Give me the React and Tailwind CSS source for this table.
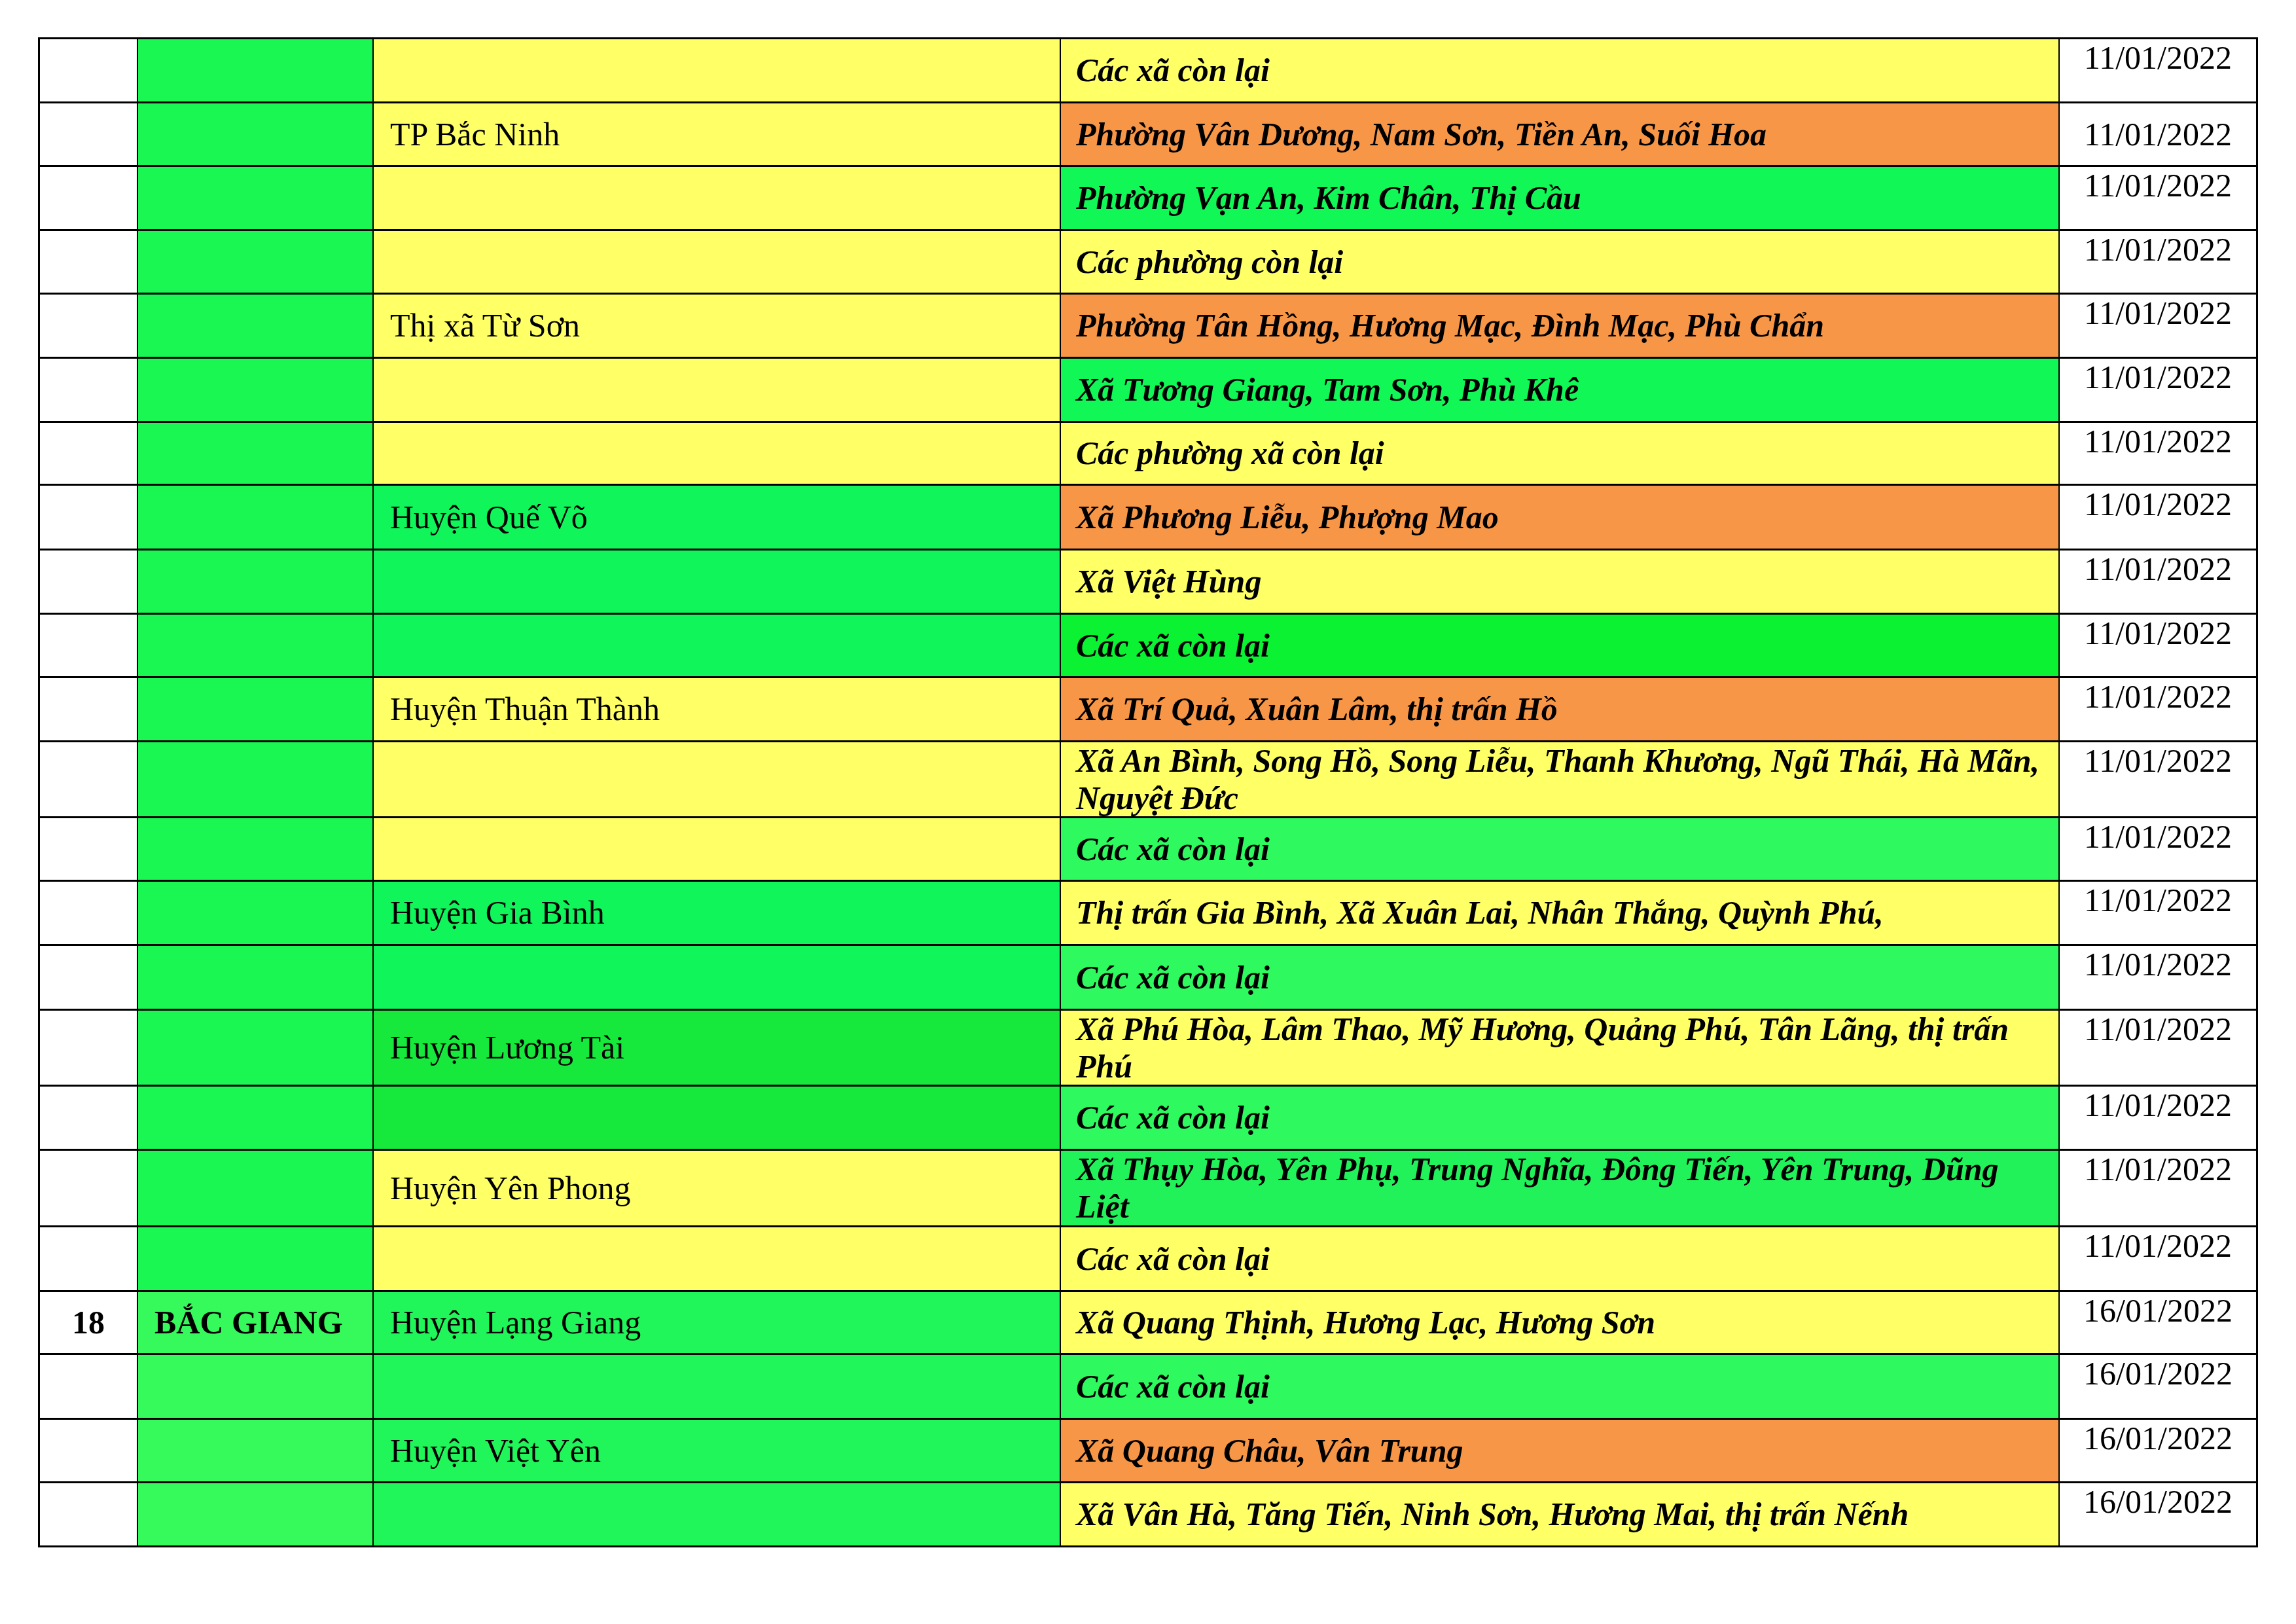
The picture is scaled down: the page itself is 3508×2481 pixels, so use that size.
import React from 'react';

const Y = 'bg-[#ffff66]';
const O = 'bg-[#f79646]';
const G1 = 'bg-[#10f756]';
const G2 = 'bg-[#2ef95e]';
const G3 = 'bg-[#22f25a]';
const LIME = 'bg-[#0af232]';
const C3G = 'bg-[#10f55a]';
const C3D = 'bg-[#16e83c]';
const C3B = 'bg-[#20f65a]';

const rows = [
  { c3: Y, c4: Y, text: ['Các xã còn lại'], date: '11/01/2022' },
  { c3: Y, name: 'TP Bắc Ninh', c4: O, text: ['Phường Vân Dương, Nam Sơn, Tiền An, Suối Hoa'], date: '11/01/2022', mid: true },
  { c3: Y, c4: G1, text: ['Phường Vạn An, Kim Chân, Thị Cầu'], date: '11/01/2022' },
  { c3: Y, c4: Y, text: ['Các phường còn lại'], date: '11/01/2022' },
  { c3: Y, name: 'Thị xã Từ Sơn', c4: O, text: ['Phường Tân Hồng, Hương Mạc, Đình Mạc, Phù Chẩn'], date: '11/01/2022' },
  { c3: Y, c4: G1, text: ['Xã Tương Giang, Tam Sơn, Phù Khê'], date: '11/01/2022' },
  { c3: Y, c4: Y, text: ['Các phường xã còn lại'], date: '11/01/2022' },
  { c3: C3G, name: 'Huyện Quế Võ', c4: O, text: ['Xã Phương Liễu, Phượng Mao'], date: '11/01/2022' },
  { c3: C3G, c4: Y, text: ['Xã Việt Hùng'], date: '11/01/2022' },
  { c3: C3G, c4: LIME, text: ['Các xã còn lại'], date: '11/01/2022' },
  { c3: Y, name: 'Huyện Thuận Thành', c4: O, text: ['Xã Trí Quả, Xuân Lâm, thị trấn Hồ'], date: '11/01/2022' },
  { c3: Y, c4: Y, text: ['Xã An Bình, Song Hồ, Song Liễu, Thanh Khương, Ngũ Thái, Hà Mãn,', 'Nguyệt Đức'], date: '11/01/2022' },
  { c3: Y, c4: G2, text: ['Các xã còn lại'], date: '11/01/2022' },
  { c3: C3G, name: 'Huyện Gia Bình', c4: Y, text: ['Thị trấn Gia Bình, Xã Xuân Lai, Nhân Thắng, Quỳnh Phú,'], date: '11/01/2022' },
  { c3: C3G, c4: G2, text: ['Các xã còn lại'], date: '11/01/2022' },
  { c3: C3D, name: 'Huyện Lương Tài', c4: Y, text: ['Xã Phú Hòa, Lâm Thao, Mỹ Hương, Quảng Phú, Tân Lãng, thị trấn', 'Phú'], date: '11/01/2022' },
  { c3: C3D, c4: G2, text: ['Các xã còn lại'], date: '11/01/2022' },
  { c3: Y, name: 'Huyện Yên Phong', c4: G3, text: ['Xã Thụy Hòa, Yên Phụ, Trung Nghĩa, Đông Tiến, Yên Trung, Dũng', 'Liệt'], date: '11/01/2022' },
  { c3: Y, c4: Y, text: ['Các xã còn lại'], date: '11/01/2022' },
  { no: '18', prov: 'BẮC GIANG', c3: C3B, name: 'Huyện Lạng Giang', c4: Y, text: ['Xã Quang Thịnh, Hương Lạc, Hương Sơn'], date: '16/01/2022' },
  { c3: C3B, c4: G2, text: ['Các xã còn lại'], date: '16/01/2022' },
  { c3: C3B, name: 'Huyện Việt Yên', c4: O, text: ['Xã Quang Châu, Vân Trung'], date: '16/01/2022' },
  { c3: C3B, c4: Y, text: ['Xã Vân Hà, Tăng Tiến, Ninh Sơn, Hương Mai, thị trấn Nếnh'], date: '16/01/2022' },
];

const App = () => {
  return (
    <div className="min-h-screen bg-white pt-[57px] pl-[58px] text-black font-['Liberation_Serif','Times_New_Roman',serif] text-[50px] leading-[57px]">
      <div className="grid w-[3392px] grid-cols-[148px_358px_1048px_1524px_300px] grid-rows-[95px_94px_95px_94px_95px_95px_93px_96px_95px_94px_95px_113px_94px_95px_96px_113px_95px_114px_96px_93px_96px_94px_95px] gap-x-[2px] gap-y-[3px] bg-black p-[3px]">
        {rows.map((r, i) => (
          <React.Fragment key={i}>
            <div className="flex items-center justify-center bg-white font-bold">{r.no}</div>
            <div className={`flex items-center pl-[25px] font-bold ${i >= 19 ? 'bg-[#36f95b]' : 'bg-[#1bf752]'}`}>{r.prov}</div>
            <div className={`flex items-center pl-[25px] ${r.c3}`}>{r.name}</div>
            <div className={`flex flex-col justify-center pl-[23px] font-bold italic ${r.c4}`}>
              {r.text.map((t, j) => (
                <span key={j} className="whitespace-nowrap">{t}</span>
              ))}
            </div>
            <div className={`flex justify-center bg-white ${r.mid ? 'items-center' : 'items-start'}`}>{r.date}</div>
          </React.Fragment>
        ))}
      </div>
    </div>
  );
};

export default App;
